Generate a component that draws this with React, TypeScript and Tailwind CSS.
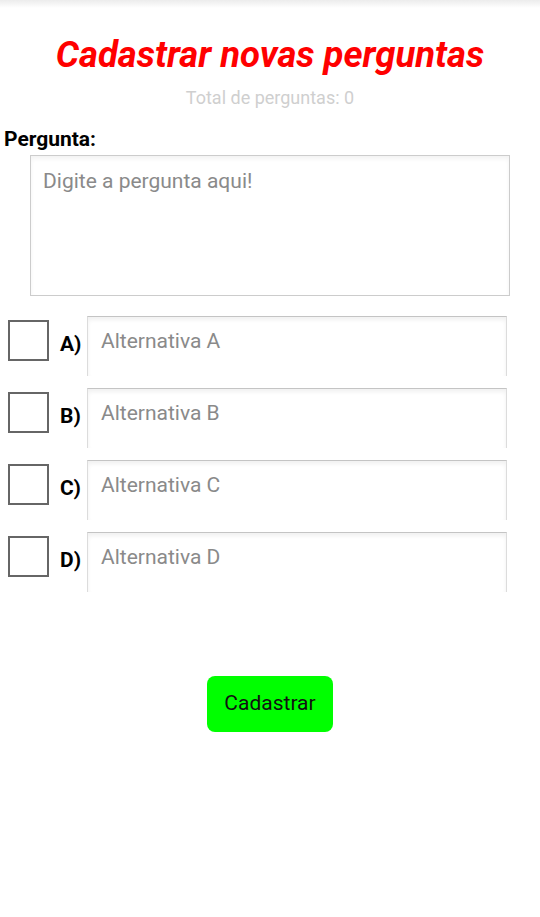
import React from "react";

const font = { fontFamily: "Roboto, 'Noto Sans', sans-serif" };

function Row({ letter }: { letter: string }) {
  return (
    <div className="flex items-start h-[60px] mb-[12px]">
      <div className="ml-[8px] w-[41px] h-[41px] border-2 border-[#666] box-border shrink-0 mt-[4px]" />
      <div className="w-[38px] shrink-0 text-[21px] font-bold text-black pl-[11px] mt-[15px] leading-[26px]">{letter})</div>
      <div className="w-[420px] h-[60px] border-t border-l border-r border-t-[#c4c4c4] border-l-[#dcdcdc] border-r-[#dcdcdc] shadow-[inset_0_3px_4px_rgba(0,0,0,0.06)] pl-[13px] pt-[11px] text-[21px] text-[#8a8a8a] leading-[26px]">
        Alternativa {letter}
      </div>
    </div>
  );
}

export default function App() {
  return (
    <div className="w-[540px] h-[917px] bg-white relative" style={font}>
      <div className="h-[8px] bg-gradient-to-b from-[#ececec] to-white" />
      <div className="text-center text-[36.5px] font-bold italic text-[#ff0000] leading-[44px] mt-[25px]">
        Cadastrar novas perguntas
      </div>
      <div className="text-center text-[18px] text-[#cfcfcf] leading-[22px] mt-[10px]">Total de perguntas: 0</div>
      <div className="text-[21px] font-bold text-black leading-[26px] pl-[4px] mt-[17px]">Pergunta:</div>
      <div className="ml-[30px] mt-[3px] w-[480px] h-[141px] border border-[#cccccc] shadow-[inset_0_3px_4px_rgba(0,0,0,0.05)] pl-[12px] pt-[12px] text-[21px] text-[#8a8a8a] leading-[26px]">
        Digite a pergunta aqui!
      </div>
      <div className="mt-[20px]">
        <Row letter="A" />
        <Row letter="B" />
        <Row letter="C" />
        <Row letter="D" />
      </div>
      <div className="flex justify-center mt-[84px]">
        <div className="w-[126px] h-[56px] bg-[#00ff00] rounded-[8px] flex items-center justify-center text-[21px] text-[#111]">
          Cadastrar
        </div>
      </div>
    </div>
  );
}
